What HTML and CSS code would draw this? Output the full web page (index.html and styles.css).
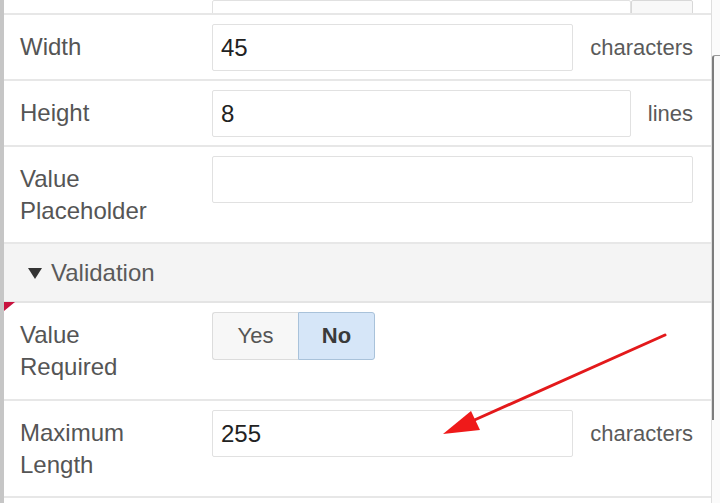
FILE: index.html
```html
<!DOCTYPE html>
<html>
<head>
<meta charset="utf-8">
<link rel="stylesheet" href="styles.css">
</head>
<body>
<div class="page">
  <div class="strip"></div>
  <div class="panel">
    <div class="row row-top">
      <div class="label"></div>
      <div class="ctrl">
        <div class="input"></div>
        <div class="mini-btn"></div>
      </div>
    </div>
    <div class="row">
      <div class="label">Width</div>
      <div class="ctrl">
        <div class="input">45</div>
        <div class="unit">characters</div>
      </div>
    </div>
    <div class="row">
      <div class="label">Height</div>
      <div class="ctrl">
        <div class="input">8</div>
        <div class="unit">lines</div>
      </div>
    </div>
    <div class="row">
      <div class="label">Value<br>Placeholder</div>
      <div class="ctrl">
        <div class="input"></div>
      </div>
    </div>
    <div class="section">
      <span class="caret"></span>
      <span class="section-title">Validation</span>
    </div>
    <div class="row row-tall">
      <div class="label">Value<br>Required</div>
      <div class="ctrl">
        <div class="toggle">
          <div class="opt opt-yes">Yes</div>
          <div class="opt opt-no">No</div>
        </div>
      </div>
    </div>
    <div class="row">
      <div class="label">Maximum<br>Length</div>
      <div class="ctrl">
        <div class="input">255</div>
        <div class="unit">characters</div>
      </div>
    </div>
  </div>
  <div class="scroll">
    <div class="thumb"></div>
  </div>

  <svg class="corner" width="12" height="10" viewBox="0 0 12 10">
    <polygon points="0,0 11,0 0,9" fill="#c8123e"/>
  </svg>

  <svg class="arrow" width="720" height="503" viewBox="0 0 720 503">
    <line x1="665" y1="335" x2="470" y2="422" stroke="#e3191b" stroke-width="3" stroke-linecap="round"/>
    <polygon points="443,434 471,411 480,430" fill="#ef1a1a"/>
  </svg>
</div>
</body>
</html>
```

FILE: styles.css
```css
html, body {
  margin: 0;
  padding: 0;
  background: #ffffff;
}

body {
  font-family: "Liberation Sans", Arial, sans-serif;
  color: #505050;
}

.page {
  position: relative;
  display: flex;
  width: 720px;
  height: 503px;
  overflow: hidden;
}

.strip {
  width: 4px;
  flex: none;
  background: #c6c6c6;
}

.panel {
  width: 707px;
  flex: none;
  border-right: 1px solid #dedede;
  background: #ffffff;
}

.row {
  display: grid;
  grid-template-columns: 192px 1fr;
  padding: 9px 18px 8px 16px;
  border-bottom: 2px solid #e7e7e7;
}

.row-tall {
  padding-bottom: 9px;
}

.row-top {
  height: 15px;
  box-sizing: border-box;
  padding-top: 0;
  overflow: hidden;
  align-items: end;
}

.row-top .ctrl {
  align-self: end;
}

.label {
  padding: 7px 0;
  font-size: 24px;
  line-height: 32px;
  color: #555555;
}

.row-top .label {
  padding: 0;
}

.ctrl {
  display: flex;
  align-items: center;
  align-self: start;
}

.input {
  flex: 1;
  height: 47px;
  box-sizing: border-box;
  border: 1px solid #e1e1e1;
  border-radius: 2px;
  padding: 0 8px;
  font-size: 24px;
  line-height: 45px;
  color: #222222;
  background: #ffffff;
}

.mini-btn {
  width: 62px;
  height: 47px;
  box-sizing: border-box;
  border: 1px solid #d8d8d8;
  border-radius: 2px;
  background: #f8f8f8;
}

.unit {
  margin-left: 17px;
  font-size: 22px;
  color: #5a5a5a;
}

.section {
  display: flex;
  align-items: center;
  height: 57px;
  padding-left: 24px;
  background: #f4f4f4;
  border-bottom: 2px solid #e4e4e4;
}

.caret {
  width: 0;
  height: 0;
  border-left: 7.5px solid transparent;
  border-right: 7.5px solid transparent;
  border-top: 11px solid #333333;
  margin-right: 9px;
  margin-top: 2px;
}

.section-title {
  font-size: 24px;
  color: #5a5a5a;
}

.toggle {
  display: flex;
  height: 48px;
}

.opt {
  display: flex;
  align-items: center;
  justify-content: center;
  box-sizing: border-box;
  font-size: 22px;
}

.opt-yes {
  width: 86px;
  background: #f7f7f7;
  border: 1px solid #dcdcdc;
  border-right: none;
  border-radius: 3px 0 0 3px;
  color: #555555;
}

.opt-no {
  width: 77px;
  background: #d6e6f8;
  border: 1px solid #a9c2da;
  border-radius: 0 3px 3px 0;
  color: #3a3a3a;
  font-weight: bold;
}

.scroll {
  width: 8px;
  flex: none;
  background: #fbfbfb;
}

.thumb {
  margin-top: 55px;
  height: 365px;
  box-sizing: border-box;
  border-left: 2px solid #7c7c7c;
  border-top: 1px solid #9a9a9a;
  border-top-left-radius: 3px;
  background: #f9f9f9;
}

.corner {
  position: absolute;
  left: 4px;
  top: 302px;
}

.arrow {
  position: absolute;
  left: 0;
  top: 0;
  pointer-events: none;
}
```
